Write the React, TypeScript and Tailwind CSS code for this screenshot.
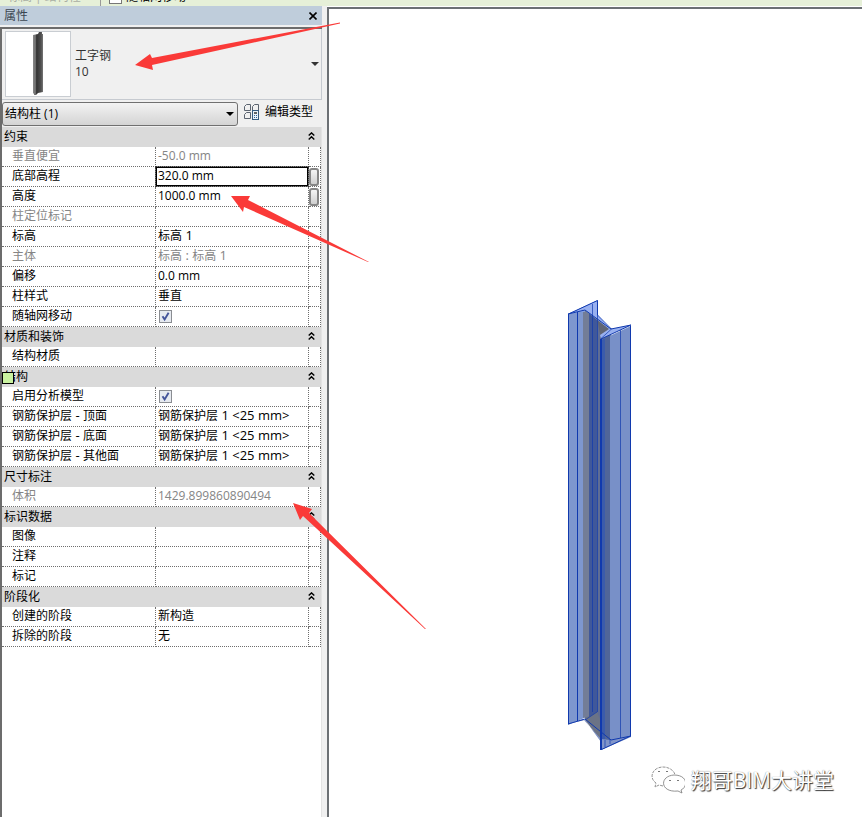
import { Fragment, useState } from "react";

type Row = {
  label: string;
  value?: string;
  readOnly?: boolean;
  kind?: "check" | "input";
  button?: boolean;
};
type Group = { title: string; handle?: boolean; rows: Row[] };

const groups: Group[] = [
  {
    title: "约束",
    rows: [
      { label: "垂直便宜", value: "-50.0 mm", readOnly: true },
      { label: "底部高程", value: "320.0 mm", kind: "input", button: true },
      { label: "高度", value: "1000.0 mm", button: true },
      { label: "柱定位标记", readOnly: true },
      { label: "标高", value: "标高 1" },
      { label: "主体", value: "标高 : 标高 1", readOnly: true },
      { label: "偏移", value: "0.0 mm" },
      { label: "柱样式", value: "垂直" },
      { label: "随轴网移动", kind: "check" },
    ],
  },
  { title: "材质和装饰", rows: [{ label: "结构材质" }] },
  {
    title: "结构",
    handle: true,
    rows: [
      { label: "启用分析模型", kind: "check" },
      { label: "钢筋保护层 - 顶面", value: "钢筋保护层 1 <25 mm>" },
      { label: "钢筋保护层 - 底面", value: "钢筋保护层 1 <25 mm>" },
      { label: "钢筋保护层 - 其他面", value: "钢筋保护层 1 <25 mm>" },
    ],
  },
  { title: "尺寸标注", rows: [{ label: "体积", value: "1429.899860890494", readOnly: true }] },
  { title: "标识数据", rows: [{ label: "图像" }, { label: "注释" }, { label: "标记" }] },
  {
    title: "阶段化",
    rows: [
      { label: "创建的阶段", value: "新构造" },
      { label: "拆除的阶段", value: "无" },
    ],
  },
];

const han = /[\u4e00-\u9fff]/;

/* Latin runs next to Chinese ones are set a pixel larger; plain numbers keep 12px. */
function Mixed({ text }: { text: string }) {
  if (!han.test(text)) return <>{text}</>;
  const runs = text.match(/[\u4e00-\u9fff]+|[^\u4e00-\u9fff]+/g) ?? [];
  return (
    <>
      {runs.map((run, i) => (
        <span key={i} className={han.test(run) ? "text-[12px]" : "text-[13px]"}>
          {run}
        </span>
      ))}
    </>
  );
}

function Chevrons() {
  return (
    <svg viewBox="0 0 7 8" className="h-2 w-[7px]" fill="none" stroke="#000" strokeWidth="1.4">
      <path d="M.7 3.6 3.5.9l2.8 2.7M.7 7.4l2.8-2.7 2.8 2.7" />
    </svg>
  );
}

function Check({ label }: { label: string }) {
  const [on, setOn] = useState(true);
  return (
    <span className="relative ml-[3px] block size-[13px]">
      <input
        type="checkbox"
        aria-label={label}
        checked={on}
        onChange={() => setOn(!on)}
        className="block size-[13px] appearance-none border border-[#8a8d92] bg-[#e6eaf0]"
      />
      {on && (
        <svg viewBox="0 0 13 13" className="pointer-events-none absolute inset-0 size-[13px]" fill="none">
          <path d="M3.5 6.3 5.6 9.4 9.6 2.8" stroke="#43549a" strokeWidth="1.9" />
        </svg>
      )}
    </span>
  );
}

const line = "border-dotted border-[#6e6e6e]";

function PropertyRow({ row }: { row: Row }) {
  const tone = row.readOnly ? "text-[#858585]" : "text-black";
  return (
    <tr className={`h-5 leading-[17px] ${tone}`}>
      <th
        scope="row"
        className={`border-r border-b ${line} h-5 p-0 pl-[10px] text-left align-top font-normal whitespace-nowrap`}
      >
        <Mixed text={row.label} />
      </th>
      <td className={`border-r border-b ${line} h-5 p-0 whitespace-nowrap ${row.kind ? "align-middle" : "align-top"}`}>
        {row.kind === "check" && <Check label={row.label} />}
        {row.kind === "input" && (
          <input
            aria-label={row.label}
            defaultValue={row.value}
            className="block h-[19px] w-full border border-black bg-white px-px pb-[2px] text-[12px] leading-4 ring-1 ring-black/50 outline-none"
          />
        )}
        {!row.kind && row.value && (
          <span className="block pl-[2px]">
            <Mixed text={row.value} />
          </span>
        )}
      </td>
      <td className={`border-r border-b ${line} h-5 p-0`}>
        {row.button && (
          <button
            type="button"
            aria-label={row.label}
            className="mx-auto block h-[18px] w-[10px] rounded-[3px] border-2 border-[#858585] bg-linear-to-b from-[#f4f4f4] to-[#cfcfcf]"
          />
        )}
      </td>
    </tr>
  );
}

function Thumbnail() {
  return (
    <svg viewBox="0 0 64 64" className="size-16">
      <defs>
        <linearGradient id="steel">
          <stop offset="0" stopColor="#888" />
          <stop offset=".28" stopColor="#6a6a6a" />
          <stop offset=".36" stopColor="#333" />
          <stop offset=".8" stopColor="#505050" />
          <stop offset="1" stopColor="#777" />
        </linearGradient>
      </defs>
      <path d="M27 3l5-1 1-2h3v2h1v58l-5 1-2 2h-2v-1l-1-1z" fill="url(#steel)" />
    </svg>
  );
}

function EditTypeIcon() {
  return (
    <svg viewBox="0 0 17 16" className="h-4 w-[17px]" fill="none" stroke="#5b6470">
      <path d="M.5 6.500v-4l2-2h4v6zM8.500 6.500v-4l2-2h4v6zM.5 14.500v-4l2-2h4v6z" />
      <rect x="8.500" y="6.500" width="6" height="9" fill="#eaf3fb" stroke="#355a80" />
      <path d="M10 9h3" stroke="#333" strokeWidth="1.5" />
      <path d="M10 11.500h1M12 11.500h1M10 13.500h1M12 13.500h1" stroke="#315f94" />
    </svg>
  );
}

/* I-section column: left flange, web, right flange, then both end caps. */
function SteelColumn() {
  return (
    <svg viewBox="568 298 64 454" className="absolute top-[289px] left-[239px] h-[454px] w-16">
      <path d="M568 314l30-14v412l-30 13z" fill="#7e97cf" />
      <path d="M585 311l5 0 21 20v406l-10 4-16-21z" fill="#6b7386" />
      <path d="M583 312h7v404l-7 2z" fill="#737d97" />
      <path d="M589 313l8 7v392l-8 5z" fill="#40589a" />
      <path d="M597 319l4 4v398l-4-9z" fill="#5f6d94" />
      <path d="M597 318l14 11-10 10z" fill="#606575" />
      <path d="M601 340l30-14v411l-30 13z" fill="#7890c8" />
      <path d="M601 340l4-2v405l-4 5z" fill="#3b5bab" />
      <path d="M605 338l5-3v405h-5z" fill="#506599" />
      <path d="M568 314l30-14v15l13 14 20-4-30 14-1-4 9-6-23-18z" fill="#98b0f0" />
      <path d="M568 724l15-5 18 20 9 1 21-4-30 14v-8l-16-22z" fill="#8195c9" />
      <g fill="none" stroke="#1039ae">
        <path d="M568.500 724V314l29-13.500V315M568 314l17-4 26 19 20-4-30 14M568 724l17-5 26 21 20-4" />
        <path d="M577.500 312v409M630.500 326v410l-29 13.500" />
        <path d="M592.500 304v408M597.500 315v397M620.500 330v408" strokeWidth=".7" />
        <path d="M597.500 315l14 14-11 10M597 712l-12 8M605 747v-7M610 744v-5" strokeWidth=".7" />
        <path d="M601 339v411" strokeWidth="2" />
      </g>
    </svg>
  );
}

function Watermark() {
  return (
    <div className="absolute right-7 bottom-[23px] flex items-center gap-[6px]">
      <svg viewBox="0 0 34 28" className="h-7 w-[34px]" fill="#fff" stroke="#777" strokeWidth=".8">
        <path d="M12 20l-4-1-4 2 1-4C-1 13 0 5 7 2s16 1 17 7" strokeDasharray="3 1" />
        <path d="M23 9c14 0 14 12 7 15l1 3-4-2c-18 2-19-15-4-16z" />
        <path d="M7 6q1-2 2 0M15 6q1-2 2 0M18 15q1-2 2 0M26 15q1-2 2 0" stroke="#555" />
      </svg>
      <span className="text-[21px] leading-7 whitespace-nowrap text-white [text-shadow:1px_1px_1px_#333,0_0_1px_#777]">
        翔哥BIM大讲堂
      </span>
    </div>
  );
}

function Arrows() {
  return (
    <svg viewBox="0 0 862 817" width="862" height="817" className="pointer-events-none absolute top-0 left-0" fill="#fa3a38">
      <path d="M135 65l15-11 2 4L340 22.500v1L152 65l1 5z" />
      <path d="M231 196l19 0-2 4L369 262h-1L244 207l-1 5z" />
      <path d="M293 503l19 6-3 4L426 629h-1L303 516l-3 4z" />
    </svg>
  );
}

export default function App() {
  return (
    <div className="relative flex h-screen min-h-[660px] flex-col overflow-hidden bg-white font-['Open_Sans','Noto_Sans_CJK_SC',sans-serif] text-[12px] leading-[18px] text-black">
      <header className="flex h-[6px] shrink-0 items-end overflow-hidden bg-[#e6f0d8] pl-2">
        <span className="w-[92px] text-[#a9aea3]">标高 | 结构柱</span>
        <span className="mr-2 h-[18px] border-l border-[#999]" />
        <label className="flex items-center gap-1">
          <input type="checkbox" className="size-[13px] appearance-none border border-[#777] bg-white" />
          随轴网移动
        </label>
      </header>
      <div className="flex min-h-0 flex-1">
        <aside className="flex w-[327px] shrink-0 flex-col bg-[#f0f0f0]">
          <div className="mr-[5px] flex h-[19px] shrink-0 items-center justify-between bg-[#bfcddb] pr-[5px] pl-1 text-[#3c4650]">
            <h1>属性</h1>
            <button type="button" aria-label="关闭" className="size-2">
              <svg viewBox="0 0 8 8" className="size-2" stroke="#000" strokeWidth="1.6">
                <path d="M.5.5l7 7M7.500.5l-7 7" />
              </svg>
            </button>
          </div>
          <div className="mt-[2px] mr-[5px] flex min-h-0 flex-1 flex-col border-t-2 border-l-2 border-[#6c6c6c]">
            <button type="button" className="flex h-[71px] shrink-0 items-center border-r border-b border-[#c6cad0] pl-[3px] text-left">
              <span className="flex size-[66px] items-center justify-center border border-[#c9cdd2] bg-white">
                <Thumbnail />
              </span>
              <span className="ml-1 flex-1 leading-4 text-[#333]">
                <span className="block">工字钢</span>
                <span className="block">10</span>
              </span>
              <span className="mr-[2px] border-x-4 border-t-4 border-x-transparent border-t-[#333]" />
            </button>
            <div className="flex h-[27px] shrink-0 items-center">
              <div className="relative w-[236px]">
                <select
                  aria-label="类别"
                  className="block h-6 w-full appearance-none rounded-[3px] border border-[#707070] bg-linear-to-b from-[#f3f3f3] to-[#d4d4d4] pl-[2px] text-[12px]"
                >
                  <option>结构柱 (1)</option>
                </select>
                <span className="pointer-events-none absolute top-[10px] right-1 border-x-4 border-t-4 border-x-transparent border-t-black" />
              </div>
              <button type="button" className="ml-[6px] flex items-center gap-1 pb-1 whitespace-nowrap">
                <EditTypeIcon />
                编辑类型
              </button>
            </div>
            <div className="min-h-0 flex-1 border-r border-[#e3e3e3] bg-white">
              <table className="w-full table-fixed border-separate border-spacing-0">
                <colgroup>
                  <col className="w-[154px]" />
                  <col />
                  <col className="w-3" />
                </colgroup>
                <tbody>
                  {groups.map((group) => (
                    <Fragment key={group.title}>
                      <tr className="h-5 bg-[#dadada]">
                        <th scope="colgroup" colSpan={3} className="h-5 p-0">
                          <div className="relative flex items-center justify-between pr-[6px] pl-[2px] font-normal">
                            {group.title}
                            <button type="button" aria-label={group.title} className="pb-[2px]">
                              <Chevrons />
                            </button>
                            {group.handle && (
                              <span className="absolute top-1 left-0 size-3 border border-black bg-[#c9f2a0]" />
                            )}
                          </div>
                        </th>
                      </tr>
                      {group.rows.map((row) => (
                        <PropertyRow key={row.label} row={row} />
                      ))}
                    </Fragment>
                  ))}
                </tbody>
              </table>
            </div>
          </div>
        </aside>
        <main className="relative mt-[1px] min-w-0 flex-1 border-t-2 border-l-2 border-[#6c7074] bg-white">
          <SteelColumn />
          <Watermark />
        </main>
      </div>
      <Arrows />
    </div>
  );
}
